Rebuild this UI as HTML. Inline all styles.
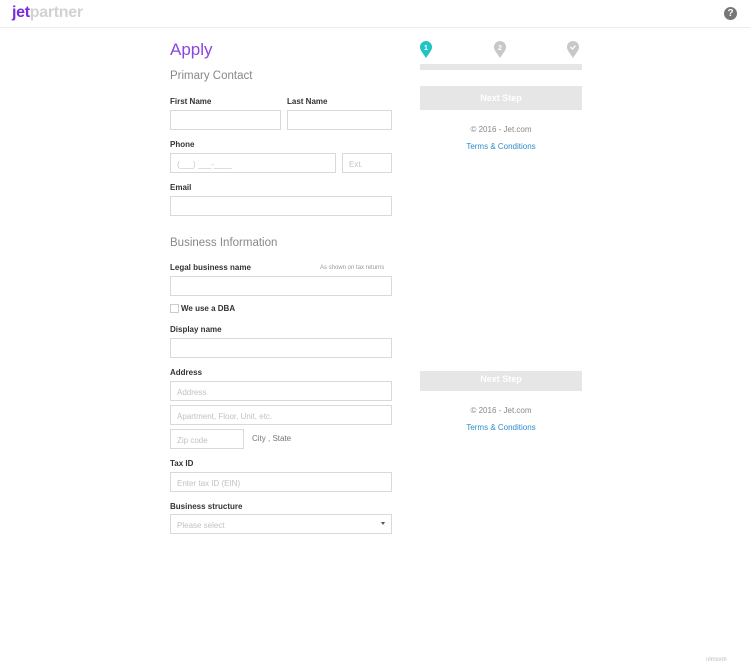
<!DOCTYPE html>
<html><head><meta charset="utf-8"><style>
*{margin:0;padding:0;box-sizing:border-box}
body{width:750px;height:667px;background:#fff;font-family:"Liberation Sans",sans-serif;position:relative;overflow:hidden;color:#333}
.a{position:absolute;white-space:nowrap}
.hdr{position:absolute;left:0;top:0;width:750px;height:28px;border-bottom:1px solid #ececec}
.lbl{position:absolute;font-size:8px;font-weight:bold;color:#333}
.in{position:absolute;height:20px;border:1px solid #d9d9d9;background:#fff;font-size:8px;color:#c2c2c2;padding:6px 0 0 6px}
.btn{position:absolute;left:420px;width:162px;background:#e6e6e6;color:#fff;font-size:9px;font-weight:bold;text-align:center}
.cp{position:absolute;left:420px;width:162px;text-align:center;font-size:8px;color:#888}
.tc{position:absolute;left:420px;width:162px;text-align:center;font-size:8px;color:#2d8ccb}
</style></head><body>
<div class="hdr"></div>
<div class="a" style="left:12px;top:4px;font-size:16px;font-weight:bold;letter-spacing:-0.3px"><span style="color:#7a2de0">jet</span><span style="color:#d2d2d2">partner</span></div>
<div class="a" style="left:724px;top:7px;width:13px;height:13px;border-radius:50%;background:#777;color:#fff;font-size:10px;font-weight:bold;text-align:center;line-height:13px">?</div>

<div class="a" style="left:170px;top:40px;font-size:17px;color:#8d44e0">Apply</div>
<div class="a" style="left:170px;top:70px;font-size:11.5px;color:#888">Primary Contact</div>

<div class="lbl" style="left:170px;top:97px">First Name</div>
<div class="lbl" style="left:287px;top:97px">Last Name</div>
<div class="in" style="left:170px;top:110px;width:111px"></div>
<div class="in" style="left:287px;top:110px;width:105px"></div>
<div class="lbl" style="left:170px;top:140px">Phone</div>
<div class="in" style="left:170px;top:153px;width:166px">(___) ___-____</div>
<div class="in" style="left:342px;top:153px;width:50px">Ext.</div>
<div class="lbl" style="left:170px;top:183px">Email</div>
<div class="in" style="left:170px;top:196px;width:222px"></div>

<div class="a" style="left:170px;top:237px;font-size:11.5px;color:#888">Business Information</div>
<div class="lbl" style="left:170px;top:263px">Legal business name</div>
<div class="a" style="left:320px;top:265px;font-size:6px;color:#999">As shown on tax returns</div>
<div class="in" style="left:170px;top:276px;width:222px"></div>
<div class="a" style="left:170px;top:304px;width:9px;height:9px;border:1px solid #ccc"></div>
<div class="lbl" style="left:181px;top:304px">We use a DBA</div>
<div class="lbl" style="left:170px;top:325px">Display name</div>
<div class="in" style="left:170px;top:338px;width:222px"></div>
<div class="lbl" style="left:170px;top:368px">Address</div>
<div class="in" style="left:170px;top:381px;width:222px">Address</div>
<div class="in" style="left:170px;top:405px;width:222px">Apartment, Floor, Unit, etc.</div>
<div class="in" style="left:170px;top:429px;width:74px">Zip code</div>
<div class="a" style="left:252px;top:434px;font-size:8px;color:#777">City , State</div>
<div class="lbl" style="left:170px;top:459px">Tax ID</div>
<div class="in" style="left:170px;top:472px;width:222px">Enter tax ID (EIN)</div>
<div class="lbl" style="left:170px;top:502px">Business structure</div>
<div class="in" style="left:170px;top:514px;width:222px">Please select</div>
<div class="a" style="left:381px;top:522px;border-left:2.5px solid transparent;border-right:2.5px solid transparent;border-top:3px solid #555"></div>

<svg class="a" style="left:419px;top:40px" width="14" height="19" viewBox="0 0 14 19"><path d="M7 18C3 12 1 10 1 7a6 6 0 0 1 12 0c0 3-2 5-6 11z" fill="#22c3c3"/><text x="7" y="10" font-size="7" font-weight="bold" fill="#fff" text-anchor="middle" font-family="Liberation Sans">1</text></svg>
<svg class="a" style="left:493px;top:40px" width="14" height="19" viewBox="0 0 14 19"><path d="M7 18C3 12 1 10 1 7a6 6 0 0 1 12 0c0 3-2 5-6 11z" fill="#c8c8c8"/><text x="7" y="10" font-size="7" font-weight="bold" fill="#fff" text-anchor="middle" font-family="Liberation Sans">2</text></svg>
<svg class="a" style="left:566px;top:40px" width="14" height="19" viewBox="0 0 14 19"><path d="M7 18C3 12 1 10 1 7a6 6 0 0 1 12 0c0 3-2 5-6 11z" fill="#c8c8c8"/><path d="M4.5 7l2 2 3-3.5" stroke="#fff" stroke-width="1.3" fill="none"/></svg>
<div class="a" style="left:420px;top:64px;width:162px;height:6px;background:#e6e6e6"></div>
<div class="btn" style="top:86px;height:24px;line-height:24px">Next Step</div>
<div class="cp" style="top:125px">© 2016 - Jet.com</div>
<div class="tc" style="top:142px">Terms &amp; Conditions</div>
<div class="btn" style="top:371px;height:20px;line-height:17px">Next Step</div>
<div class="cp" style="top:406px">© 2016 - Jet.com</div>
<div class="tc" style="top:423px">Terms &amp; Conditions</div>
<div class="a" style="left:706px;top:657px;font-size:6px;color:#bbb">ıılmxxm</div>
</body></html>
